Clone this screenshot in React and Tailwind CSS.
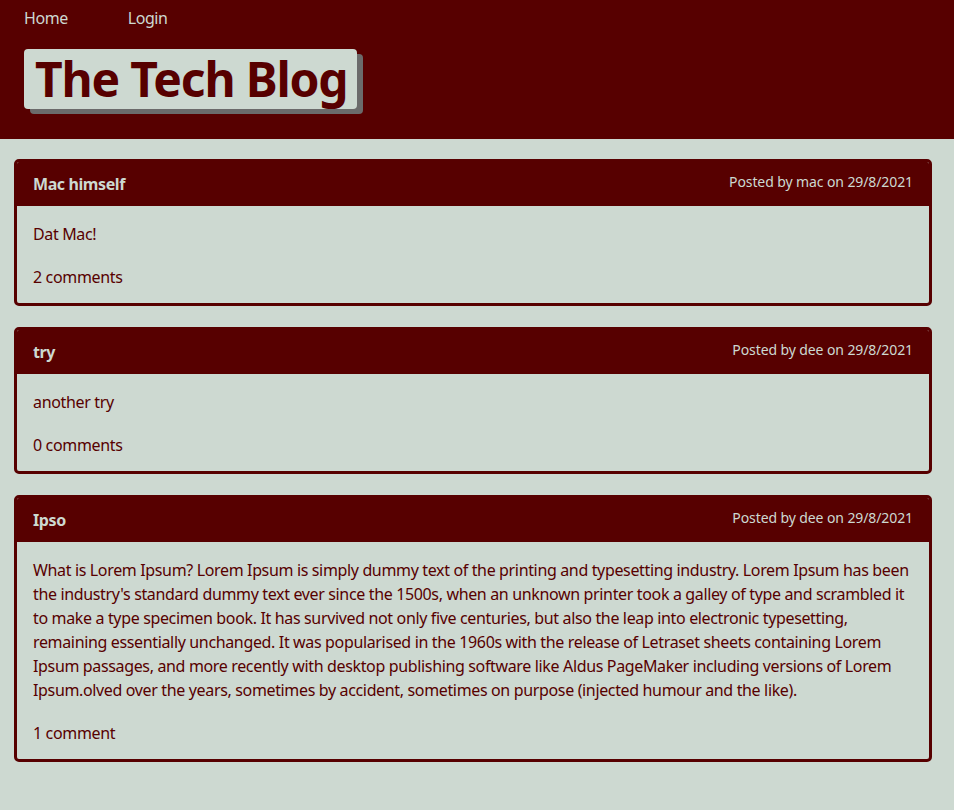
import React from 'react';

const posts = [
  {
    id: 1,
    title: 'Mac himself',
    author: 'mac',
    date: '29/8/2021',
    body: 'Dat Mac!',
    comments: '2 comments',
  },
  {
    id: 2,
    title: 'try',
    author: 'dee',
    date: '29/8/2021',
    body: 'another try',
    comments: '0 comments',
  },
  {
    id: 3,
    title: 'Ipso',
    author: 'dee',
    date: '29/8/2021',
    body:
      "What is Lorem Ipsum? Lorem Ipsum is simply dummy text of the printing and typesetting industry. Lorem Ipsum has been the industry's standard dummy text ever since the 1500s, when an unknown printer took a galley of type and scrambled it to make a type specimen book. It has survived not only five centuries, but also the leap into electronic typesetting, remaining essentially unchanged. It was popularised in the 1960s with the release of Letraset sheets containing Lorem Ipsum passages, and more recently with desktop publishing software like Aldus PageMaker including versions of Lorem Ipsum.olved over the years, sometimes by accident, sometimes on purpose (injected humour and the like).",
    comments: '1 comment',
  },
];

const PostCard = ({ post }) => (
  <div className="border-[3px] border-[#570000] rounded-[5px] overflow-hidden">
    {/* Card header */}
    <div className="bg-[#570000] h-[44px] px-4 flex items-center justify-between">
      <h2 className="text-[16px] font-bold tracking-[-0.4px] text-[#cdd9d1]">{post.title}</h2>
      <span className="text-[14px] tracking-[-0.1px] text-[#cdd9d1] -mt-[5px]">
        Posted by {post.author} on {post.date}
      </span>
    </div>
    {/* Card body */}
    <div className="px-4 pt-4 pb-[14px] text-[#570000] tracking-[-0.35px]">
      <p className="leading-6">{post.body}</p>
      <p className="leading-6 mt-[19px]">{post.comments}</p>
    </div>
  </div>
);

const App = () => {
  return (
    <div
      className="min-h-[810px] bg-[#cdd9d1]"
      style={{ fontFamily: '"Noto Sans", "Liberation Sans", sans-serif' }}
    >
      {/* Header */}
      <header className="bg-[#570000] h-[139px] px-6">
        <nav className="flex gap-[60px] pt-[6px] text-[#cdd9d1] text-[16px] leading-6 tracking-[-0.45px]">
          <a href="#">Home</a>
          <a href="#">Login</a>
        </nav>
        <div className="mt-[19px] inline-block bg-[#cdd9d1] rounded-[4px] shadow-[6px_5px_0_#6b6b6b] pl-[11px] pr-[10px] h-[60px]">
          <h1 className="text-[48px] font-bold leading-[60px] tracking-[-1.2px] text-[#570000]">The Tech Blog</h1>
        </div>
      </header>

      {/* Posts */}
      <main className="pl-[14px] pr-[22px] pt-5 flex flex-col gap-[21px]">
        {posts.map((post) => (
          <PostCard key={post.id} post={post} />
        ))}
      </main>
    </div>
  );
};

export default App;
